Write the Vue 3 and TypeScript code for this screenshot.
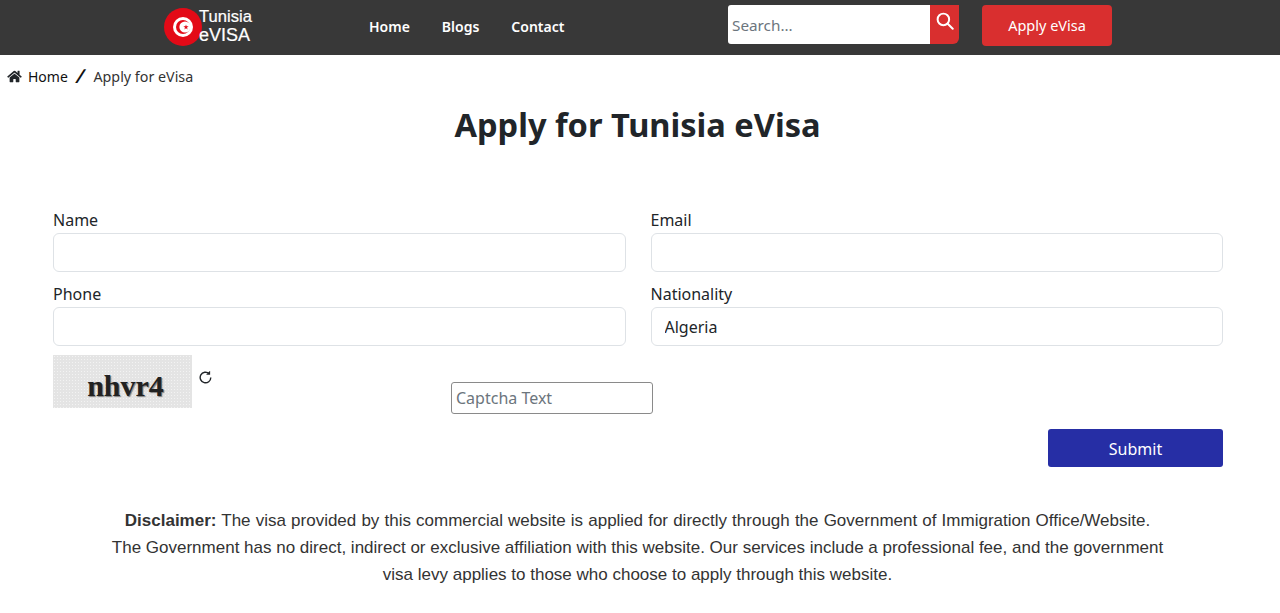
<template>
  <div class="page">
    <header class="topbar">
      <a class="logo" href="#">
        <svg class="logo-flag" viewBox="0 0 38 38" width="38" height="38">
          <circle cx="19" cy="19" r="19" fill="#e30a17" />
          <circle cx="19" cy="19" r="10" fill="#fff" />
          <circle cx="19" cy="19" r="7" fill="#e30a17" />
          <circle cx="21" cy="19" r="5.6" fill="#fff" />
          <g transform="translate(22 19) scale(.8) translate(-24 -19)">
            <polygon points="24,15.8 24.8,18.2 27.3,18.2 25.3,19.7 26,22 24,20.6 22,22 22.7,19.7 20.7,18.2 23.2,18.2" fill="#e30a17" />
          </g>
        </svg>
        <span class="logo-text">Tunisia<br /><span class="logo-sub">eVISA</span></span>
      </a>
      <nav class="nav">
        <a v-for="link in navLinks" :key="link" href="#">{{ link }}</a>
      </nav>
      <form class="search" @submit.prevent>
        <input type="text" placeholder="Search..." />
        <button type="submit" aria-label="Search">
          <svg viewBox="0 0 20 20" width="18" height="18" fill="none" stroke="#fff" stroke-width="2.2" stroke-linecap="round">
            <circle cx="8.2" cy="8.2" r="6.4" />
            <path d="M13 13l5.6 5.6" />
          </svg>
        </button>
      </form>
      <a class="apply" href="#">Apply eVisa</a>
    </header>

    <div class="crumbs">
      <svg class="home" viewBox="0 0 576 512" width="15" height="13" fill="#212529">
        <path d="M280.4 148.300 96 300.100V464a16 16 0 0 0 16 16l112.100-.3a16 16 0 0 0 15.900-16V368a16 16 0 0 1 16-16h64a16 16 0 0 1 16 16v95.600a16 16 0 0 0 16 16.100L464 480a16 16 0 0 0 16-16V300L295.700 148.300a12.200 12.200 0 0 0-15.300 0zM571.600 251.500 488 182.600V44.100a12 12 0 0 0-12-12h-56a12 12 0 0 0-12 12v72.600L318.500 43a48 48 0 0 0-61 0L4.300 251.500a12 12 0 0 0-1.600 16.900l25.500 31A12 12 0 0 0 45.200 301l235.200-193.700a12.200 12.200 0 0 1 15.300 0L530.900 301a12 12 0 0 0 16.900-1.600l25.500-31a12 12 0 0 0-1.700-16.900z" />
      </svg>
      <a href="#">Home</a>
      <span class="slash">/</span>
      <span class="current">Apply for eVisa</span>
    </div>

    <h1>Apply for Tunisia eVisa</h1>

    <form class="form" @submit.prevent>
      <div class="grid">
        <div v-for="field in fields" :key="field.label" class="field">
          <label>{{ field.label }}</label>
          <input type="text" :value="field.value" />
        </div>
      </div>

      <div class="captcha-row">
        <div class="captcha-img"><span>nhvr4</span></div>
        <svg class="refresh" viewBox="1.500 1.500 13 13" width="13" height="13" fill="none" stroke="#212529" stroke-width="1.400">
          <path d="M13.300 8a5.300 5.300 0 1 1-1.700-3.900" />
          <path d="M12.600 1.200v4H8.600z" fill="#212529" stroke="none" />
        </svg>
        <input class="captcha-input" type="text" placeholder="Captcha Text" />
      </div>

      <div class="actions">
        <button class="submit" type="submit">Submit</button>
      </div>
    </form>

    <p class="disclaimer">
      <span class="first-line"><b>Disclaimer:</b> The visa provided by this commercial website is applied for directly through the Government of Immigration Office/Website.</span><br />
      The Government has no direct, indirect or exclusive affiliation with this website. Our services include a professional fee, and the government<br />
      visa levy applies to those who choose to apply through this website.
    </p>
  </div>
</template>

<script setup lang="ts">
const navLinks = ['Home', 'Blogs', 'Contact']

const fields = [
  { label: 'Name', value: '' },
  { label: 'Email', value: '' },
  { label: 'Phone', value: '' },
  { label: 'Nationality', value: 'Algeria' },
]
</script>

<style>
html, body { margin: 0; background: #fff; }
</style>

<style scoped>
.page {
  height: 613px;
  overflow: hidden;
  font-family: "Noto Sans", "Open Sans", sans-serif;
  color: #212529;
}
a { color: inherit; text-decoration: none; }
.topbar {
  height: 55px;
  background: #383838;
  display: flex;
  align-items: center;
  padding-left: 164px;
  box-sizing: border-box;
}
.logo { display: flex; align-items: center; width: 205px; color: #fff; margin-top: -1px; }
.logo-text {
  font-family: "Liberation Sans", Arial, sans-serif;
  font-size: 16.600px;
  line-height: 18px;
  margin-left: -3px;
  margin-top: -2px;
  -webkit-text-stroke: 0.2px #fff;
}
.logo-sub { font-size: 18px; }
.nav { display: flex; gap: 32px; width: 359px; color: #fff; font-size: 14px; font-weight: 600; margin-top: -3px; }
.search { display: flex; width: 231px; height: 39px; margin-top: -7px; }
.search input {
  width: 202px;
  border: 0;
  outline: 0;
  padding: 2px 4px 0;
  box-sizing: border-box;
  font: 15.300px "Noto Sans", sans-serif;
  border-radius: 3px 0 0 3px;
}
.search input::placeholder { color: #6c757d; }
.search button {
  width: 29px;
  border: 0;
  padding: 0 0 4px;
  background: #d92f2f;
  border-radius: 0 0 6px 0;
}
.apply {
  margin-left: 23px;
  width: 130px;
  height: 41px;
  margin-top: -4px;
  padding-bottom: 2px;
  box-sizing: border-box;
  background: #d92f2f;
  border-radius: 4px;
  color: #fff;
  font-size: 14.500px;
  display: flex;
  align-items: center;
  justify-content: center;
}
.crumbs {
  display: flex;
  align-items: center;
  height: 22px;
  margin-top: 10px;
  padding-left: 7px;
  font-size: 14px;
}
.crumbs a { margin-left: 6px; color: #111; }
.slash {
  margin: 0 9px 0 9px;
  font-size: 19px;
  font-weight: 600;
  line-height: 22px;
  color: #111;
  transform: skewX(-15deg);
}
.current { color: #333; font-size: 14.300px; }
h1 {
  margin: 12px 0 0;
  font-size: 32.600px;
  line-height: 52px;
  font-weight: 700;
  text-align: center;
  padding-right: 5px;
}
.form { padding: 0 57px 0 53px; margin-top: 58px; }
.grid { display: grid; grid-template-columns: 572.500px 572.500px; column-gap: 25px; row-gap: 11px; }
.field label { display: block; font-size: 16px; line-height: 22px; margin-bottom: 2px; }
.field input {
  display: block;
  width: 100%;
  height: 39px;
  box-sizing: border-box;
  border: 1px solid #dee2e6;
  border-radius: 6px;
  padding: 0 13px;
  font: 16px "Noto Sans", sans-serif;
  color: #212529;
  outline: 0;
}
.captcha-row { display: flex; align-items: flex-start; margin-top: 9px; height: 58px; }
.captcha-img {
  width: 139px;
  height: 53px;
  background-color: #e4e4e4;
  background-image: radial-gradient(circle, rgba(255, 255, 255, .55) 0 .7px, transparent 1px);
  background-size: 3px 3px;
  display: flex;
  align-items: center;
  justify-content: center;
}
.captcha-img span {
  font: 700 30px "Liberation Serif", serif;
  color: #222;
  padding: 8px 0 0 6px;
  text-shadow: 1px 1px 1px rgba(60, 60, 60, .6);
}
.refresh { margin: 16px 0 0 7px; }
.captcha-input {
  margin: 27px 0 0 239px;
  width: 202px;
  height: 32px;
  box-sizing: border-box;
  border: 1px solid #8a8a8a;
  border-radius: 3px;
  padding: 0 4px;
  font: 16px "Noto Sans", sans-serif;
  outline: 0;
}
.captcha-input::placeholder { color: #6c757d; }
.actions { display: flex; justify-content: flex-end; margin-top: 16px; }
.submit {
  width: 175px;
  height: 38px;
  padding: 1px 0 0;
  background: #262ea5;
  color: #fff;
  border: 0;
  border-radius: 3px;
  font: 16px "Noto Sans", sans-serif;
}
.disclaimer {
  margin: 40px 0 0;
  font-family: "Liberation Sans", Arial, sans-serif;
  font-size: 17px;
  line-height: 27px;
  text-align: center;
  color: #333;
  padding-right: 5px;
}
.first-line { word-spacing: .4px; }
</style>
